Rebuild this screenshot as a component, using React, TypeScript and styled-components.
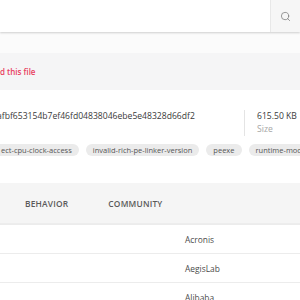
import styled, { createGlobalStyle } from "styled-components";
import { Search } from "lucide-react";

const GlobalStyle = createGlobalStyle`
  html, body {
    margin: 0;
    padding: 0;
    background: #ffffff;
  }
  body {
    font-family: "Open Sans", "Liberation Sans", sans-serif;
  }
`;

const Page = styled.div`
  width: 300px;
  height: 300px;
  overflow: hidden;
  display: flex;
  flex-direction: column;
  background: #ffffff;
`;

const Header = styled.div`
  height: 32px;
  flex-shrink: 0;
  display: flex;
  justify-content: flex-end;
  background: #ffffff;
  box-shadow: 0 1px 2px rgba(0, 0, 0, 0.18);
  position: relative;
  z-index: 1;
`;

const SearchBox = styled.div`
  width: 20px;
  display: flex;
  align-items: center;
  padding-left: 9px;
  background: #f6f6f6;
  border-left: 1px solid #e8e8e8;
  color: #777;
`;

const Spacer = styled.div`
  height: 21px;
  flex-shrink: 0;
  background: #fbfbfb;
`;

const AlertBand = styled.div`
  height: 37px;
  flex-shrink: 0;
  display: flex;
  align-items: center;
  background: #f5f5f6;
  color: #e8405f;
  font-size: 8px;
  font-weight: 600;
`;

const Info = styled.div`
  padding-top: 20px;
  display: flex;
  flex-direction: column;
`;

const HashRow = styled.div`
  display: flex;
  align-items: flex-start;
`;

const Hash = styled.div`
  flex: 1;
  margin-left: -3px;
  font-size: 8.6px;
  line-height: 13px;
  color: #3a3a3a;
  white-space: nowrap;
`;

const Divider = styled.div`
  width: 1px;
  height: 26px;
  background: #e4e4e4;
  margin-right: 12px;
`;

const SizeBlock = styled.div`
  width: 43px;
  display: flex;
  flex-direction: column;
  font-size: 8.6px;
  line-height: 13px;
  white-space: nowrap;
`;

const SizeValue = styled.span`
  color: #3a3a3a;
`;

const SizeLabel = styled.span`
  color: #a6a6a6;
`;

const ChipRow = styled.div`
  margin-top: 8px;
  margin-left: -6px;
  display: flex;
  gap: 7px;
`;

const Chip = styled.span`
  flex-shrink: 0;
  height: 12px;
  padding: 0 7px;
  border-radius: 6px;
  background: #ebebeb;
  color: #555;
  font-size: 7.5px;
  line-height: 12px;
  white-space: nowrap;
`;

const TabBar = styled.div`
  margin-top: 27px;
  height: 40px;
  flex-shrink: 0;
  display: flex;
  align-items: center;
  gap: 40px;
  padding-left: 25px;
  background: #f5f5f5;
  border-bottom: 1px solid #ededed;
`;

const Tab = styled.span`
  font-size: 8.4px;
  font-weight: 600;
  color: #5a5a5a;
  letter-spacing: 0.2px;
`;

const Row = styled.div`
  height: 28px;
  flex-shrink: 0;
  display: flex;
  align-items: center;
  padding-left: 185px;
  border-top: 1px solid #ececec;
  font-size: 8.4px;
  color: #4a4a4a;
`;

const tags = [
  "ect-cpu-clock-access",
  "invalid-rich-pe-linker-version",
  "peexe",
  "runtime-modules",
];

const vendors = ["Acronis", "AegisLab", "Alibaba"];

const App = () => {
  return (
    <Page>
      <GlobalStyle />
      <Header>
        <SearchBox>
          <Search size={11} strokeWidth={1.6} />
        </SearchBox>
      </Header>
      <Spacer />
      <AlertBand>d this file</AlertBand>
      <Info>
        <HashRow>
          <Hash>afbf653154b7ef46fd04838046ebe5e48328d66df2</Hash>
          <Divider />
          <SizeBlock>
            <SizeValue>615.50 KB</SizeValue>
            <SizeLabel>Size</SizeLabel>
          </SizeBlock>
        </HashRow>
        <ChipRow>
          {tags.map((t) => (
            <Chip key={t}>{t}</Chip>
          ))}
        </ChipRow>
      </Info>
      <TabBar>
        <Tab>BEHAVIOR</Tab>
        <Tab>COMMUNITY</Tab>
      </TabBar>
      {vendors.map((v) => (
        <Row key={v}>{v}</Row>
      ))}
    </Page>
  );
};

export default App;
